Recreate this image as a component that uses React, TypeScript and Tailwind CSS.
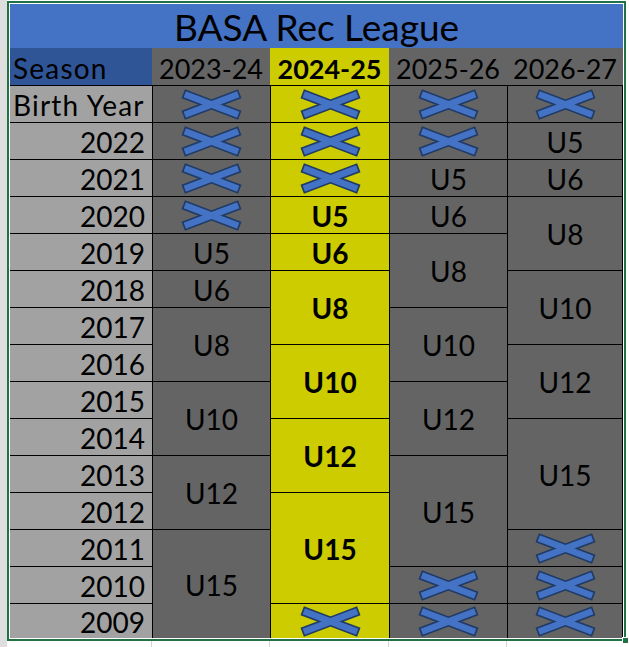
type Seg = { text?: string; span?: number };

const X: Seg = {};

const years = ["2022", "2021", "2020", "2019", "2018", "2017", "2016", "2015", "2014", "2013", "2012", "2011", "2010", "2009"];

const seasons: { bold?: boolean; segs: Seg[] }[] = [
  { segs: [X, X, X, X, { text: "U5" }, { text: "U6" }, { text: "U8", span: 2 }, { text: "U10", span: 2 }, { text: "U12", span: 2 }, { text: "U15", span: 3 }] },
  { bold: true, segs: [X, X, X, { text: "U5" }, { text: "U6" }, { text: "U8", span: 2 }, { text: "U10", span: 2 }, { text: "U12", span: 2 }, { text: "U15", span: 3 }, X] },
  { segs: [X, X, { text: "U5" }, { text: "U6" }, { text: "U8", span: 2 }, { text: "U10", span: 2 }, { text: "U12", span: 2 }, { text: "U15", span: 3 }, X, X] },
  { segs: [X, { text: "U5" }, { text: "U6" }, { text: "U8", span: 2 }, { text: "U10", span: 2 }, { text: "U12", span: 2 }, { text: "U15", span: 3 }, X, X, X] },
];

const spanClass: Record<number, string> = { 1: "row-span-1", 2: "row-span-2", 3: "row-span-3" };

function Cross() {
  return (
    <svg width="63" height="31" viewBox="0 0 63 31">
      <polygon
        points="5.4,1.3 31.5,11.2 57.6,1.3 60.4,8.7 42.7,15.5 60.4,22.3 57.6,29.7 31.5,19.8 5.4,29.7 2.6,22.3 20.3,15.5 2.6,8.7"
        fill="#4472c4"
        stroke="#1f3b66"
        strokeWidth="1.7"
        strokeLinejoin="miter"
      />
    </svg>
  );
}

export default function App() {
  return (
    <div className="min-h-screen bg-white flex" style={{ fontFamily: "Lato, 'Noto Sans', sans-serif" }}>
      {/* strip of the neighbouring column */}
      <div className="w-[7px] bg-[#dedede]" />

      <div className="flex flex-col">
        <div className="h-px" />
        <div className="border-2 border-[#217346] p-px bg-white relative">
          <div className="w-[613px] text-black text-[28px] leading-none">
            <div className="h-[44px] bg-[#4472c4] flex items-center justify-center text-[37px]">
              BASA Rec League
            </div>

            <div className="h-[37px] grid grid-cols-[142px_118px_119px_118px_116px]">
              <div className="bg-[#2f5597] flex items-center pl-[3px] pt-[3px] tracking-[1.2px]">Season</div>
              <div className="bg-[#646464] flex items-center justify-center pt-[3px] text-[27px]">2023-24</div>
              <div className="bg-[#cccc00] flex items-center justify-center pt-[3px] text-[27px] font-bold">2024-25</div>
              <div className="bg-[#646464] flex items-center justify-center pt-[3px] text-[27px]">2025-26</div>
              <div className="bg-[#646464] flex items-center justify-center pt-[3px] text-[27px]">2026-27</div>
            </div>

            <div className="grid grid-flow-col grid-cols-[142px_117px_118px_117px_114px] grid-rows-[repeat(14,36px)_34px] gap-px bg-black border-t border-r border-black">
              <div className="bg-[#a2a2a2] flex items-center pl-[3px] pt-px tracking-[1.2px]">Birth Year</div>
              {years.map((y) => (
                <div key={y} className="bg-[#a2a2a2] flex items-center justify-end pr-[7px] pt-px">
                  {y}
                </div>
              ))}
              {seasons.map((s, ci) =>
                s.segs.map((seg, i) => (
                  <div
                    key={ci + "-" + i}
                    className={`${spanClass[seg.span ?? 1]} ${s.bold ? "bg-[#cccc00] font-bold" : "bg-[#646464]"} flex items-center justify-center pt-px`}
                  >
                    {seg.text ?? <Cross />}
                  </div>
                ))
              )}
            </div>
          </div>
          <div className="absolute -right-[5px] -bottom-[5px] w-[7px] h-[7px] bg-[#217346] border border-white" />
        </div>

        {/* empty sheet cells below */}
        <div className="flex h-[6px]">
          <div className="w-[145px] border-r border-[#d4d4d4]" />
          <div className="w-[118px] border-r border-[#d4d4d4]" />
          <div className="w-[119px] border-r border-[#d4d4d4]" />
          <div className="w-[118px] border-r border-[#d4d4d4]" />
        </div>
      </div>
    </div>
  );
}
